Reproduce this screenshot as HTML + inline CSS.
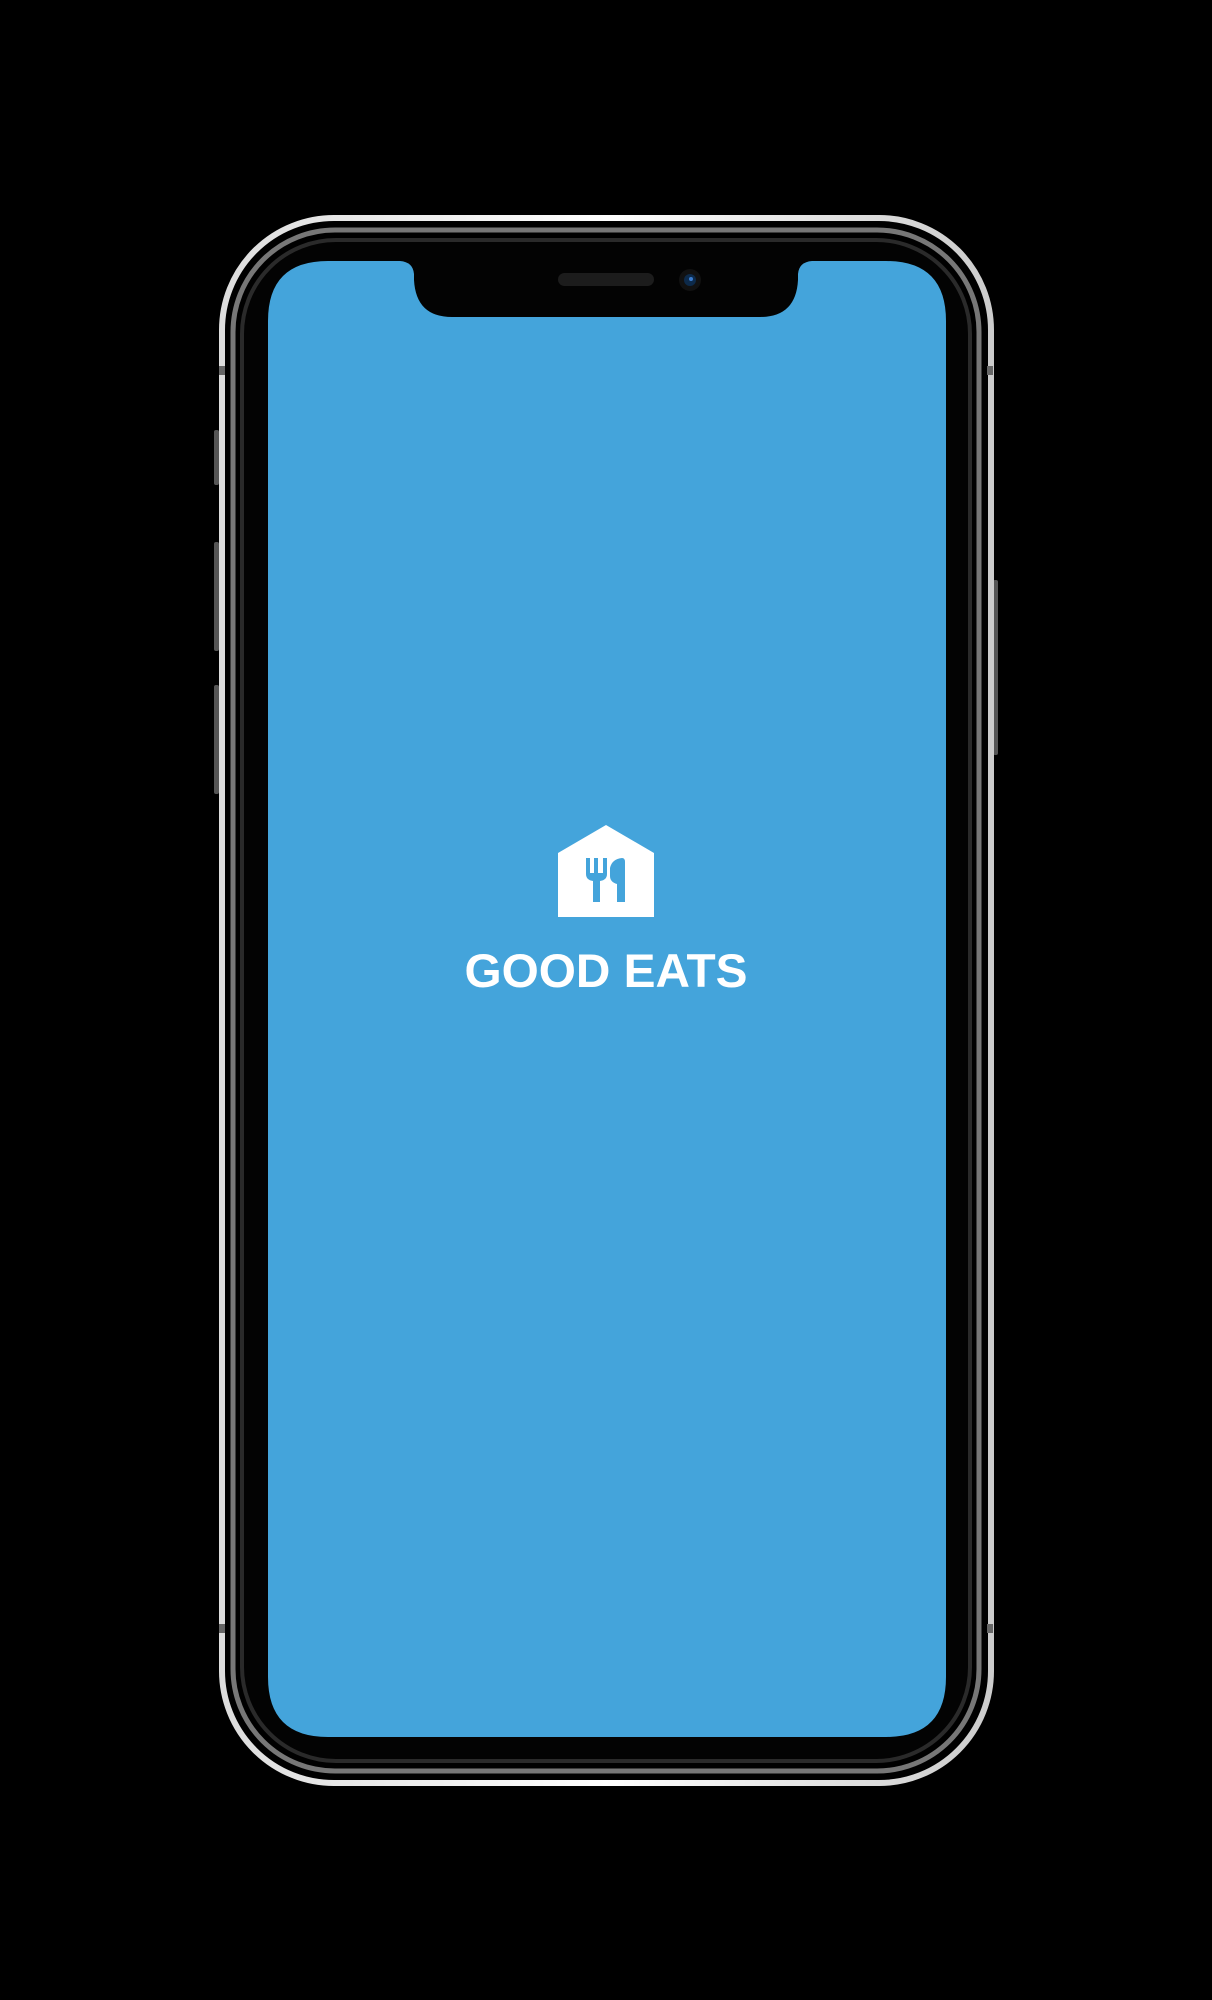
<!DOCTYPE html>
<html><head><meta charset="utf-8"><style>
html,body{margin:0;padding:0;background:#000;width:1212px;height:2000px;overflow:hidden}
svg{display:block}
</style></head><body>
<svg width="1212" height="2000" viewBox="0 0 1212 2000" xmlns="http://www.w3.org/2000/svg">
<defs>
<linearGradient id="fr" x1="0" y1="0" x2="1" y2="0">
<stop offset="0" stop-color="#ddd"/><stop offset="0.5" stop-color="#fff"/><stop offset="1" stop-color="#ccc"/>
</linearGradient>
</defs>
<rect width="1212" height="2000" fill="#000"/>
<rect x="214" y="430" width="5" height="55" rx="2" fill="#555"/>
<rect x="214" y="542" width="5" height="109" rx="2" fill="#555"/>
<rect x="214" y="685" width="5" height="109" rx="2" fill="#555"/>
<rect x="993" y="580" width="5" height="175" rx="2" fill="#555"/>
<rect x="222" y="218" width="769" height="1565" rx="112" fill="#000" stroke="url(#fr)" stroke-width="6"/>
<rect x="233" y="230" width="746" height="1541" rx="102" fill="none" stroke="#777" stroke-width="5"/>
<rect x="242" y="240" width="728" height="1521" rx="94" fill="#030303" stroke="#2a2a2a" stroke-width="4"/>
<rect x="219" y="366" width="6" height="9" fill="#666"/>
<rect x="987" y="366" width="6" height="9" fill="#666"/>
<rect x="219" y="1624" width="6" height="9" fill="#666"/>
<rect x="987" y="1624" width="6" height="9" fill="#666"/>
<path d="M328 261 H400 Q413 262 414 274 V280 Q416 317 452 317 H760 Q796 317 798 280 V274 Q799 262 812 261 H886 Q946 261 946 321 V1677 Q946 1737 886 1737 H328 Q268 1737 268 1677 V321 Q268 261 328 261 Z" fill="#44a4db"/>
<rect x="558" y="273" width="96" height="13" rx="6.5" fill="#1c1c1c"/>
<circle cx="690" cy="280" r="11" fill="#111"/>
<circle cx="690" cy="280" r="6" fill="#0d2a4a"/>
<circle cx="691" cy="279" r="2" fill="#3a7acc"/>
<path d="M558 853 L606 825 L654 853 V917 H558 Z" fill="#fff"/>
<path d="M586 858 H590 V873 H594 V858 H598 V873 H603 V858 H607 V874 Q607 880 600 881 V902 H593 V881 Q586 880 586 874 Z" fill="#44a4db"/>
<path d="M610 868 Q612 859 622 858 Q625 858 625 862 V902 H617 V884 Q610 882 610 876 Z" fill="#44a4db"/>
<text x="606" y="987" text-anchor="middle" font-family="Liberation Sans, sans-serif" font-weight="bold" font-size="47" fill="#fff" textLength="283" lengthAdjust="spacingAndGlyphs">GOOD EATS</text>
</svg>
</body></html>
